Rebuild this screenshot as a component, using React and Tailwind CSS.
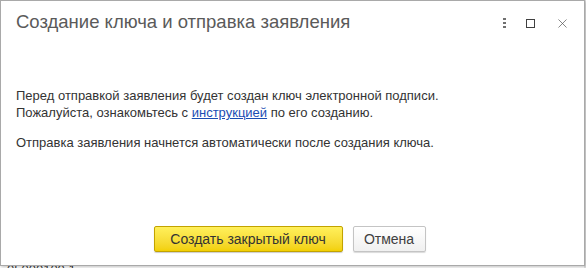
import { X } from 'lucide-react';

export default function App() {
    return (
        <div className="relative w-[586px] h-[268px] overflow-hidden bg-white font-['Liberation_Sans',Arial,sans-serif]">
            {/* page behind the dialog */}
            <div className="absolute left-[7px] top-[262px] text-[13px] leading-[16px] text-[#333]">05000100 1</div>
            <div className="absolute right-0 top-0 w-[2px] h-full bg-[#e4e4e4]"></div>

            <div className="absolute left-0 top-0 w-[585px] h-[266px] bg-white border border-[#a9a9a9] shadow-[1px_1px_3px_rgba(0,0,0,0.25)] flex flex-col">
                <div className="flex items-center h-[40px] pl-[15px] pr-[14px]">
                    <h1 className="text-[18.5px] text-[#5a5a5a] leading-none pt-[2px] grow">
                        Создание ключа и отправка заявления
                    </h1>
                    <div className="flex items-center gap-[20px] pt-[4px]">
                        <div className="flex flex-col gap-[2px] items-center w-[4px]">
                            <span className="w-[3px] h-[2px] bg-[#707070]"></span>
                            <span className="w-[3px] h-[2px] bg-[#707070]"></span>
                            <span className="w-[3px] h-[2px] bg-[#707070]"></span>
                        </div>
                        <span className="w-[9px] h-[9px] border border-[#404040]"></span>
                        <X size={15} strokeWidth={1.1} className="text-[#505050]" />
                    </div>
                </div>

                <div className="px-[15px] pt-[46px] text-[13px] leading-[17px] text-[#333]">
                    <p>Перед отправкой заявления будет создан ключ электронной подписи.</p>
                    <p>
                        Пожалуйста, ознакомьтесь с <a href="#" className="text-[#1a4db3] underline">инструкцией</a> по его созданию.
                    </p>
                    <p className="mt-[13px]">Отправка заявления начнется автоматически после создания ключа.</p>
                </div>

                <div className="mt-auto flex justify-center gap-[10px] pb-[13px] pr-[6px]">
                    <button className="w-[189px] h-[26px] rounded-[2px] border border-[#c2a300] bg-gradient-to-b from-[#fff05a] to-[#f2d000] text-[14px] text-[#333] shadow-[0_1px_1px_rgba(0,0,0,0.2)]">
                        Создать закрытый ключ
                    </button>
                    <button className="w-[73px] h-[26px] rounded-[2px] border border-[#c4c4c4] bg-gradient-to-b from-white to-[#f0f0f0] text-[14px] text-[#404040] shadow-[0_1px_1px_rgba(0,0,0,0.15)]">
                        Отмена
                    </button>
                </div>
            </div>
        </div>
    );
}
